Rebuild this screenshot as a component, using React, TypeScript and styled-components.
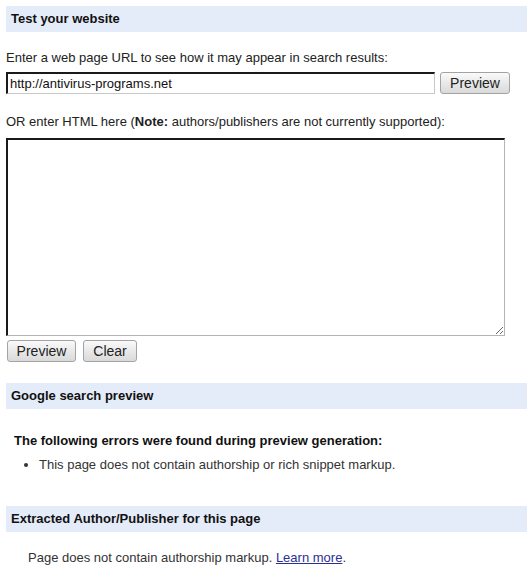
import styled, { createGlobalStyle } from 'styled-components';

const GlobalStyle = createGlobalStyle`
  body {
    margin: 0;
    background: #fff;
    font-family: Arial, "Liberation Sans", sans-serif;
    font-size: 13px;
    color: #222;
  }
`;

const Page = styled.div`
  padding: 6px 0 0 6px;
`;

const SectionHeader = styled.div`
  height: 26px;
  line-height: 26px;
  padding-left: 5px;
  background: #e5ecf9;
  font-weight: bold;
  color: #111;
`;

const Label = styled.div<{ $top: number }>`
  margin-top: ${(p) => p.$top}px;
  line-height: 16px;
`;

const UrlRow = styled.div`
  display: flex;
  gap: 5px;
  margin-top: 6px;
`;

const UrlInput = styled.input`
  box-sizing: border-box;
  width: 429px;
  height: 22px;
  padding: 0 2px;
  border-style: solid;
  border-width: 2px 1px 1px 2px;
  border-color: #1a1a1a #c8c8c8 #c8c8c8 #1a1a1a;
  font: 13px Arial, "Liberation Sans", sans-serif;
  color: #111;
  outline: none;
`;

const Button = styled.button<{ $w: number }>`
  box-sizing: border-box;
  width: ${(p) => p.$w}px;
  height: 22px;
  padding: 0;
  border: 1px solid #a3a3a3;
  border-radius: 3px;
  background: linear-gradient(#fafafa, #e9e9e9 50%, #dadada);
  font: 14px Arial, "Liberation Sans", sans-serif;
  color: #222;
`;

const HtmlArea = styled.textarea`
  display: block;
  box-sizing: border-box;
  width: 499px;
  height: 198px;
  margin-top: 8px;
  border-style: solid;
  border-width: 2px 1px 1px 2px;
  border-color: #1a1a1a #b4b4b4 #b4b4b4 #1a1a1a;
  outline: none;
`;

const ButtonRow = styled.div`
  display: flex;
  gap: 7px;
  margin: 4px 0 21px 1px;
`;

const ErrorBlock = styled.div`
  padding: 24px 0 0 8px;
`;

const ErrorTitle = styled.div`
  font-weight: bold;
  line-height: 16px;
  color: #111;
`;

const ErrorList = styled.ul`
  margin: 8px 0 33px;
  padding-left: 25px;
  line-height: 16px;
  color: #333;
`;

const Note = styled.div`
  padding: 18px 0 0 22px;
  line-height: 16px;
  color: #333;
`;

const Link = styled.a`
  color: #2b2f96;
  text-decoration: underline;
`;

export default function App() {
  return (
    <>
      <GlobalStyle />
      <Page>
        <SectionHeader>Test your website</SectionHeader>
        <Label $top={18}>Enter a web page URL to see how it may appear in search results:</Label>
        <UrlRow>
          <UrlInput defaultValue="http://antivirus-programs.net" />
          <Button $w={70}>Preview</Button>
        </UrlRow>
        <Label $top={20}>
          OR enter HTML here (<b>Note:</b> authors/publishers are not currently supported):
        </Label>
        <HtmlArea />
        <ButtonRow>
          <Button $w={69}>Preview</Button>
          <Button $w={54}>Clear</Button>
        </ButtonRow>
        <SectionHeader>Google search preview</SectionHeader>
        <ErrorBlock>
          <ErrorTitle>The following errors were found during preview generation:</ErrorTitle>
          <ErrorList>
            <li>This page does not contain authorship or rich snippet markup.</li>
          </ErrorList>
        </ErrorBlock>
        <SectionHeader>Extracted Author/Publisher for this page</SectionHeader>
        <Note>
          Page does not contain authorship markup. <Link href="#">Learn more</Link>.
        </Note>
      </Page>
    </>
  );
}
